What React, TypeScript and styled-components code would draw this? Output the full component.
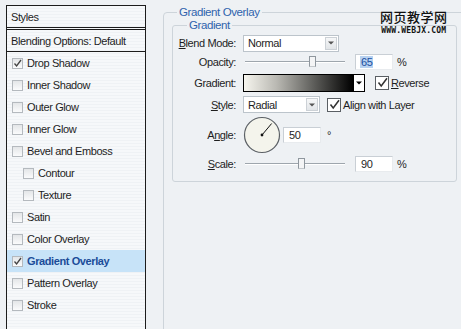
import React from 'react';
import styled, { createGlobalStyle } from 'styled-components';

const GlobalStyle = createGlobalStyle`
    html, body {
        margin: 0;
        padding: 0;
        background: #eef1f4;
    }

    body {
        font-family: 'Liberation Sans', Arial, sans-serif;
        font-size: 11px;
        letter-spacing: -0.4px;
        color: #1e1e1e;
    }
`;

const Page = styled.div`
    position: relative;
    display: flex;
    width: 461px;
    height: 329px;
    overflow: hidden;
    background: #eef1f4;
`;

const StylesPanel = styled.div`
    display: flex;
    flex-direction: column;
    width: 138px;
    margin: 5px 0 0 6px;
    border: 1px solid #1c1c1c;
    border-bottom: none;
    background: repeating-linear-gradient(
        to bottom,
        #f6f8fa 0 2px,
        #eff2f5 2px 3px
    );
`;

const PanelHeader = styled.div`
    display: flex;
    align-items: center;
    height: 21px;
    padding-left: 4px;
    border-bottom: 3px double #1c1c1c;
`;

const BlendingRow = styled.div`
    display: flex;
    align-items: center;
    height: 21px;
    padding-left: 4px;
    border-bottom: 1px solid #1c1c1c;
`;

const StyleRow = styled.div<{ $indent?: boolean; $active?: boolean }>`
    display: flex;
    align-items: center;
    gap: 4px;
    height: 22px;
    padding-left: ${(p) => (p.$indent ? 16 : 5)}px;
    background: ${(p) => (p.$active ? '#c7e3f8' : 'transparent')};
    color: ${(p) => (p.$active ? '#1b4c98' : '#1e1e1e')};
    font-weight: ${(p) => (p.$active ? 700 : 400)};
`;

const SmallBox = styled.span`
    display: flex;
    align-items: center;
    justify-content: center;
    width: 9px;
    height: 9px;
    border: 1px solid #b4b9be;
    background: linear-gradient(to bottom, #e4e6e8, #fafbfc);

    svg {
        width: 9px;
        height: 9px;
    }
`;

const Main = styled.div`
    flex: 1;
    padding-left: 17px;
`;

const OuterGroup = styled.fieldset`
    margin: 6px -20px 0 0;
    padding: 0 0 0 8px;
    height: 360px;
    border: 1px solid #cdd4da;
    border-radius: 4px;
`;

const GroupTitle = styled.legend<{ $offset: number }>`
    margin-left: ${(p) => p.$offset}px;
    padding: 0 2px;
    line-height: 13px;
    font-size: 11.5px;
    color: #2f63ad;
`;

const InnerGroup = styled.fieldset`
    margin: 0;
    width: 283px;
    height: 159px;
    padding: 2px 0 0 0;
    border: 1px solid #cdd4da;
    border-radius: 3px;
`;

const Form = styled.div`
    display: grid;
    grid-template-columns: 63px 1fr;
    column-gap: 7px;
    row-gap: 1px;
    align-items: center;
`;

const Label = styled.div<{ $h: number }>`
    height: ${(p) => p.$h}px;
    display: flex;
    align-items: center;
    justify-content: flex-end;

    u {
        text-decoration: underline;
        text-underline-offset: 1px;
    }
`;

const Controls = styled.div<{ $h: number }>`
    height: ${(p) => p.$h}px;
    display: flex;
    align-items: center;
`;

const Select = styled.div<{ $w: number }>`
    position: relative;
    display: flex;
    align-items: center;
    box-sizing: border-box;
    width: ${(p) => p.$w}px;
    height: 17px;
    padding-left: 4px;
    background: #fff;
    border: 1px solid #bcc4cb;
`;

const SelectButton = styled.span`
    position: absolute;
    right: 1px;
    top: 1px;
    display: flex;
    align-items: center;
    justify-content: center;
    width: 12px;
    height: 13px;
    background: linear-gradient(to bottom, #f6f7f8, #e2e5e8);
    border: 1px solid #ccd1d6;
    box-sizing: border-box;
`;

const Slider = styled.div`
    position: relative;
    width: 104px;
    height: 12px;
    margin-left: 2px;

    &::before {
        content: '';
        position: absolute;
        left: 0;
        right: 4px;
        top: 5px;
        height: 1px;
        background: #9ea6ad;
        box-shadow: 0 1px 0 #fff;
    }
`;

const Thumb = styled.span`
    position: absolute;
    top: 0;
    width: 5px;
    height: 9px;
    border: 1px solid #8f979e;
    border-bottom-color: #c3c8cc;
    background: #f4f5f6;
`;

const NumberBox = styled.div<{ $selected?: boolean }>`
    display: flex;
    align-items: center;
    box-sizing: border-box;
    width: 38px;
    height: 16px;
    padding-left: 4px;
    background: #fff;
    border: 1px solid #c9cfd5;
    border-right-color: #e8ebee;
    border-bottom-color: #e8ebee;

    span {
        padding: 0 1px;
        background: ${(p) => (p.$selected ? '#b8d2f0' : 'transparent')};
        color: ${(p) => (p.$selected ? '#1a4ea0' : '#1e1e1e')};
    }
`;

const Unit = styled.span<{ $gap: number }>`
    margin-left: ${(p) => p.$gap}px;
`;

const GradientBar = styled.div`
    width: 109px;
    height: 16px;
    border: 1px solid #000;
    background: linear-gradient(to right, #f6f5ee 0%, #b9b8b2 30%, #5b5b58 65%, #000 100%);
`;

const GradientArrow = styled.span`
    display: flex;
    align-items: center;
    justify-content: center;
    width: 10px;
    height: 16px;
    border: 1px solid #000;
    border-left: none;
    background: #fff;
`;

const CheckItem = styled.label<{ $gap: number }>`
    display: flex;
    align-items: center;
    gap: 2px;
    margin-left: ${(p) => p.$gap}px;

    u {
        text-decoration: underline;
        text-underline-offset: 1px;
    }
`;

const BigBox = styled.span`
    display: flex;
    align-items: center;
    justify-content: center;
    width: 12px;
    height: 12px;
    border: 1px solid #5a5f64;
    background: #fff;
`;

const Dial = styled.svg`
    width: 38px;
    height: 38px;
`;

const Watermark = styled.div`
    position: absolute;
    left: 380px;
    top: 9px;
    display: flex;
    flex-direction: column;
    align-items: center;
    color: #111;
    letter-spacing: 0;

    .cn {
        font-family: 'Noto Sans CJK SC', sans-serif;
        font-size: 13px;
        line-height: 15px;
        letter-spacing: 0.5px;
        font-weight: 500;
    }

    .en {
        font-family: 'DejaVu Sans Mono', monospace;
        font-size: 8px;
        line-height: 9px;
        font-weight: 700;
        letter-spacing: 0.2px;
        margin-top: 2px;
    }
`;

const SmallCheck = () => (
    <svg viewBox="0 0 9 9">
        <path d="M1.5 4.5 L3.6 7 L8 1" fill="none" stroke="#444" strokeWidth="1.3" />
    </svg>
);

const BigCheck = () => (
    <svg width="11" height="11" viewBox="0 0 11 11">
        <path d="M1.5 5.5 L4.2 9 L10 1.2" fill="none" stroke="#333" strokeWidth="1.5" />
    </svg>
);

const DownArrow = ({ color = '#333' }: { color?: string }) => (
    <svg width="6" height="4" viewBox="0 0 6 4">
        <path d="M0 0.5 H6 L3 3.5 Z" fill={color} />
    </svg>
);

const styles: { name: string; checked?: boolean; indent?: boolean; active?: boolean }[] = [
    { name: 'Drop Shadow', checked: true },
    { name: 'Inner Shadow' },
    { name: 'Outer Glow' },
    { name: 'Inner Glow' },
    { name: 'Bevel and Emboss' },
    { name: 'Contour', indent: true },
    { name: 'Texture', indent: true },
    { name: 'Satin' },
    { name: 'Color Overlay' },
    { name: 'Gradient Overlay', checked: true, active: true },
    { name: 'Pattern Overlay' },
    { name: 'Stroke' },
];

const angle = 50;
const r = 15;
const ax = 19 + r * Math.cos((angle * Math.PI) / 180);
const ay = 19 - r * Math.sin((angle * Math.PI) / 180);

export default function App() {
    return (
        <Page>
            <GlobalStyle />
            <StylesPanel>
                <PanelHeader>Styles</PanelHeader>
                <BlendingRow>Blending Options: Default</BlendingRow>
                {styles.map((s) => (
                    <StyleRow key={s.name} $indent={s.indent} $active={s.active}>
                        <SmallBox>{s.checked && <SmallCheck />}</SmallBox>
                        {s.name}
                    </StyleRow>
                ))}
            </StylesPanel>

            <Main>
                <OuterGroup>
                    <GroupTitle $offset={5}>Gradient Overlay</GroupTitle>
                    <InnerGroup>
                        <GroupTitle $offset={14}>Gradient</GroupTitle>
                        <Form>
                            <Label $h={18}>
                                <span><u>B</u>lend Mode:</span>
                            </Label>
                            <Controls $h={18}>
                                <Select $w={96}>
                                    Normal
                                    <SelectButton>
                                        <DownArrow color="#555" />
                                    </SelectButton>
                                </Select>
                            </Controls>

                            <Label $h={18}>Opacity:</Label>
                            <Controls $h={18}>
                                <Slider>
                                    <Thumb style={{ left: '62%' }} />
                                </Slider>
                                <NumberBox $selected style={{ marginLeft: 6 }}>
                                    <span>65</span>
                                </NumberBox>
                                <Unit $gap={4}>%</Unit>
                            </Controls>

                            <Label $h={21}>Gradient:</Label>
                            <Controls $h={21}>
                                <GradientBar />
                                <GradientArrow>
                                    <DownArrow color="#000" />
                                </GradientArrow>
                                <CheckItem $gap={10}>
                                    <BigBox>
                                        <BigCheck />
                                    </BigBox>
                                    <span><u>R</u>everse</span>
                                </CheckItem>
                            </Controls>

                            <Label $h={21}>
                                <span><u>S</u>tyle:</span>
                            </Label>
                            <Controls $h={21}>
                                <Select $w={77}>
                                    Radial
                                    <SelectButton>
                                        <DownArrow color="#555" />
                                    </SelectButton>
                                </Select>
                                <CheckItem $gap={7}>
                                    <BigBox>
                                        <BigCheck />
                                    </BigBox>
                                    <span>Align with Layer</span>
                                </CheckItem>
                            </Controls>

                            <Label $h={37}>
                                <span>A<u>n</u>gle:</span>
                            </Label>
                            <Controls $h={37}>
                                <Dial viewBox="0 0 38 38">
                                    <circle cx="19" cy="19" r="17.5" fill="#f4f4ec" stroke="#5c6166" strokeWidth="1.2" />
                                    <line x1="19" y1="19" x2={ax} y2={ay} stroke="#111" strokeWidth="1" />
                                    <circle cx="19" cy="19" r="1.4" fill="#111" />
                                </Dial>
                                <NumberBox style={{ marginLeft: 2 }}>
                                    <span>50</span>
                                </NumberBox>
                                <Unit $gap={6}>°</Unit>
                            </Controls>

                            <Label $h={20}>
                                <span><u>S</u>cale:</span>
                            </Label>
                            <Controls $h={20}>
                                <Slider>
                                    <Thumb style={{ left: '51%' }} />
                                </Slider>
                                <NumberBox style={{ marginLeft: 6 }}>
                                    <span>90</span>
                                </NumberBox>
                                <Unit $gap={4}>%</Unit>
                            </Controls>
                        </Form>
                    </InnerGroup>
                </OuterGroup>
            </Main>

            <Watermark>
                <span className="cn">网页教学网</span>
                <span className="en">WWW.WEBJX.COM</span>
            </Watermark>
        </Page>
    );
}
